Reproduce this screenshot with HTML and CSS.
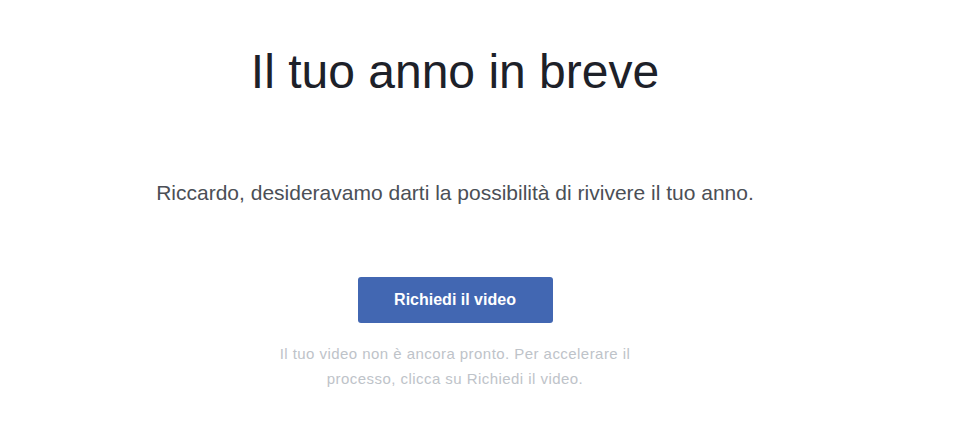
FILE: index.html
```html
<!DOCTYPE html>
<html lang="it">
<head>
<meta charset="utf-8">
<title>Il tuo anno in breve</title>
<link rel="stylesheet" href="styles.css">
</head>
<body>
<main class="page">
  <h1 class="title">Il tuo anno in breve</h1>
  <p class="lead">Riccardo, desideravamo darti la possibilità di rivivere il tuo anno.</p>
  <a class="btn" href="#">Richiedi il video</a>
  <p class="note">Il tuo video non è ancora pronto. Per accelerare il processo, clicca su Richiedi il video.</p>
</main>
</body>
</html>
```
FILE: styles.css
```css
html, body {
  margin: 0;
  padding: 0;
  background: #ffffff;
}
body {
  font-family: "Liberation Sans", Arial, Helvetica, sans-serif;
  width: 960px;
  height: 422px;
  overflow: hidden;
}
.page {
  width: 910px;
  display: flex;
  flex-direction: column;
  align-items: center;
  text-align: center;
  padding-top: 44px;
}
.title {
  margin: 0;
  font-size: 48px;
  line-height: 56px;
  font-weight: normal;
  color: #1d2129;
}
.lead {
  margin: 81px 0 0;
  font-size: 21px;
  line-height: 24px;
  color: #4b4f56;
}
.btn {
  margin-top: 72px;
  width: 195px;
  height: 46px;
  box-sizing: border-box;
  display: flex;
  align-items: center;
  justify-content: center;
  background: #4267b2;
  border-radius: 3px;
  color: #ffffff;
  font-weight: bold;
  font-size: 16px;
  text-decoration: none;
}
.note {
  margin: 19px 0 0;
  width: 370px;
  font-size: 15px;
  letter-spacing: 0.45px;
  line-height: 24.5px;
  color: #bec3c9;
}
```
